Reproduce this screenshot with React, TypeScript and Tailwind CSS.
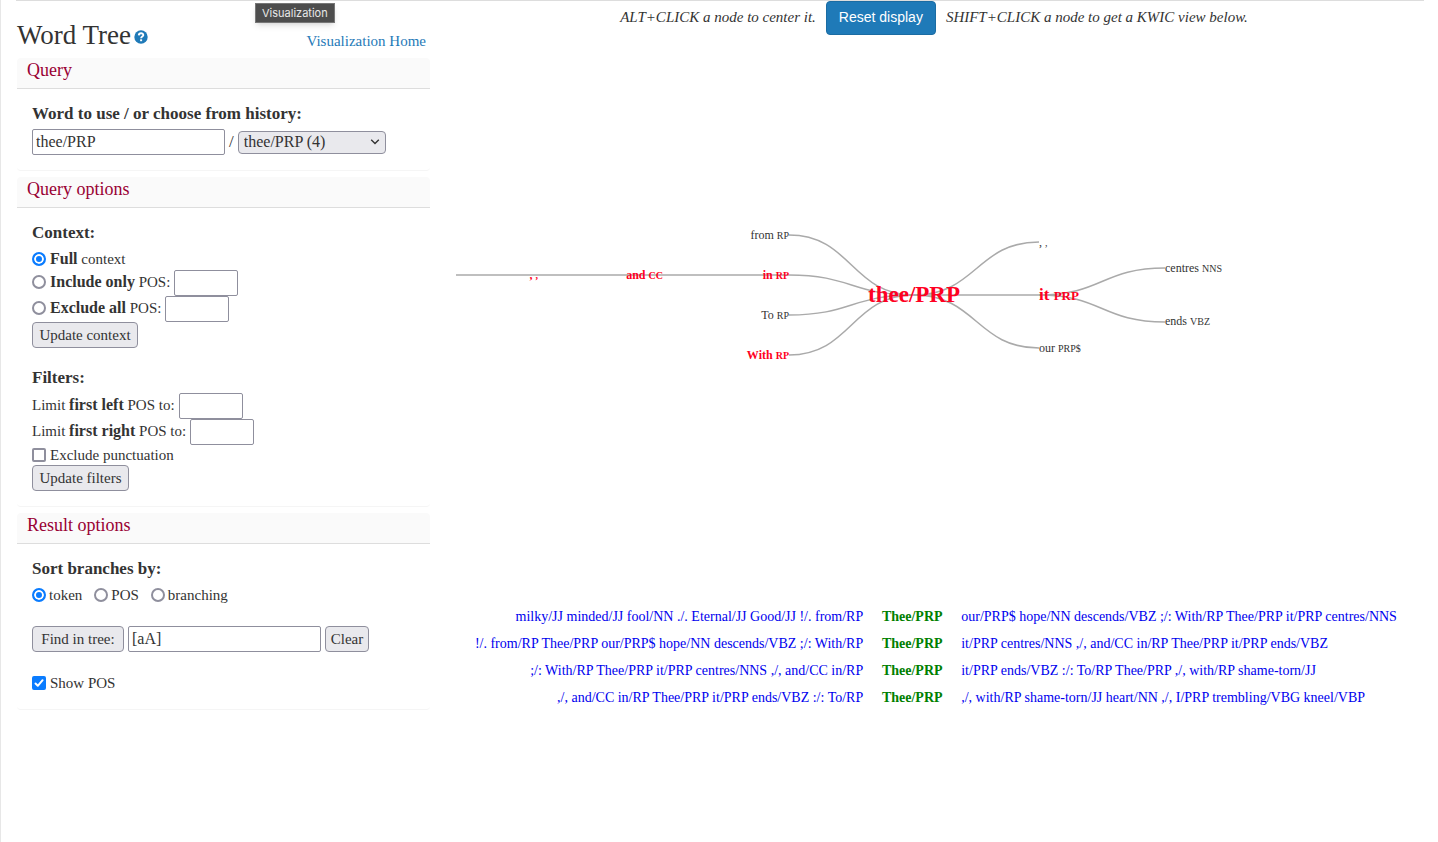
import { useId, useState } from "react";
import type { ReactNode } from "react";

function Panel({ title, children }: { title: string; children: ReactNode }) {
  return (
    <section className="mb-1.5 rounded border-b border-[#f5f5f5] bg-white">
      <h2 className="h-[31px] rounded-t border-b border-[#dddddd] bg-[#fafafa] pl-2.5 text-[18px] leading-6 text-[#990033]">
        {title}
      </h2>
      <div className="px-[15px] py-[15px]">{children}</div>
    </section>
  );
}

function GroupTitle({ children }: { children: ReactNode }) {
  return <h3 className="mb-[5px] text-[17px] leading-5 font-bold">{children}</h3>;
}

function Radio(props: { id: string; name: string; defaultChecked?: boolean }) {
  return (
    <input
      type="radio"
      {...props}
      className="size-3.5 shrink-0 appearance-none rounded-full border-2 border-[#8f8f9d] bg-white checked:border-[#0a7cff] checked:bg-[#0a7cff] checked:shadow-[inset_0_0_0_2px_#ffffff]"
    />
  );
}

function Check({ id, defaultChecked }: { id: string; defaultChecked?: boolean }) {
  return (
    <span className="grid size-3.5 shrink-0">
      <input
        id={id}
        type="checkbox"
        defaultChecked={defaultChecked}
        className="peer col-start-1 row-start-1 size-3.5 appearance-none rounded-xs border-2 border-[#8f8f9d] bg-white checked:border-[#0a7cff] checked:bg-[#0a7cff]"
      />
      <svg
        viewBox="0 0 14 14"
        className="pointer-events-none invisible col-start-1 row-start-1 size-3.5 peer-checked:visible"
        fill="none"
        stroke="white"
        strokeWidth="2"
        strokeLinecap="round"
        strokeLinejoin="round"
      >
        <path d="M3.5 7.5 L5.8 9.8 L10.6 4.2" />
      </svg>
    </span>
  );
}

function Button({ children, className = "" }: { children: ReactNode; className?: string }) {
  return (
    <button
      type="button"
      className={`h-[26px] rounded border border-[#8f8f9d] bg-[#e9e9ed] text-center text-[15px] leading-5 whitespace-nowrap ${className}`}
    >
      {children}
    </button>
  );
}

const field = "h-[26px] rounded-xs border border-[#8f8f9d] bg-white px-[3px] text-[16px]";

function Strong({ children }: { children: ReactNode }) {
  return <b className="text-[16px]">{children}</b>;
}

function PosField({ label, radio }: { label: ReactNode; radio?: string }) {
  const id = useId();
  return (
    <div className="flex h-[26px] items-center gap-1">
      <span className="flex items-center gap-1 pb-0.5">
        {radio && <Radio id={id + "r"} name={radio} />}
        <label htmlFor={radio ? id + "r" : id}>{label}</label>
      </span>
      <input id={id} type="text" aria-label="POS" className={`${field} w-16`} />
    </div>
  );
}

type Node = {
  x: number;
  y: number;
  word: string;
  pos: string;
  size: number;
  posSize: number;
  anchor: "start" | "end";
  hot?: boolean;
};

const nodes: Node[] = [
  { x: 333, y: 203, word: "from", pos: "RP", size: 12, posSize: 10, anchor: "end" },
  { x: 333, y: 243, word: "in", pos: "RP", size: 12, posSize: 10, anchor: "end", hot: true },
  { x: 333, y: 283, word: "To", pos: "RP", size: 12, posSize: 10, anchor: "end" },
  { x: 333, y: 323, word: "With", pos: "RP", size: 12, posSize: 10, anchor: "end", hot: true },
  { x: 207, y: 243, word: "and", pos: "CC", size: 12, posSize: 10, anchor: "end", hot: true },
  { x: 82, y: 243, word: ",", pos: ",", size: 12, posSize: 10, anchor: "end", hot: true },
  { x: 583, y: 210, word: ",", pos: ",", size: 12, posSize: 10, anchor: "start" },
  { x: 583, y: 264, word: "it", pos: "PRP", size: 17, posSize: 13, anchor: "start", hot: true },
  { x: 583, y: 316, word: "our", pos: "PRP$", size: 12, posSize: 10, anchor: "start" },
  { x: 709, y: 236, word: "centres", pos: "NNS", size: 12, posSize: 10, anchor: "start" },
  { x: 709, y: 289, word: "ends", pos: "VBZ", size: 12, posSize: 10, anchor: "start" },
];

const links = [
  [458, 259, 333, 199],
  [458, 259, 333, 239],
  [458, 259, 333, 279],
  [458, 259, 333, 319],
  [333, 239, 0, 239],
  [458, 259, 583, 206],
  [458, 259, 583, 259],
  [458, 259, 583, 312],
  [583, 259, 709, 232],
  [583, 259, 709, 286],
];

function WordTree() {
  return (
    <svg viewBox="0 0 968 567" className="block h-auto w-full" role="img" aria-label="Word tree">
      <g fill="none" stroke="#aaaaaa" strokeWidth="1.5">
        {links.map(([x1, y1, x2, y2], i) => {
          const mid = (x1 + x2) / 2;
          return <path key={i} d={`M${x1} ${y1}C${mid} ${y1} ${mid} ${y2} ${x2} ${y2}`} />;
        })}
      </g>
      {nodes.map((n, i) => (
        <text
          key={i}
          x={n.x}
          y={n.y}
          fontSize={n.size}
          textAnchor={n.anchor}
          fill={n.hot ? "#ff0022" : "#333333"}
          fontWeight={n.hot ? 700 : 400}
        >
          {n.word} <tspan fontSize={n.posSize}>{n.pos}</tspan>
        </text>
      ))}
      <text x="458" y="266" fontSize="23" fontWeight="700" fill="#ff0022" textAnchor="middle">
        thee/PRP
      </text>
    </svg>
  );
}

const concordance = [
  [
    "milky/JJ minded/JJ fool/NN ./. Eternal/JJ Good/JJ !/. from/RP",
    "our/PRP$ hope/NN descends/VBZ ;/: With/RP Thee/PRP it/PRP centres/NNS",
  ],
  [
    "!/. from/RP Thee/PRP our/PRP$ hope/NN descends/VBZ ;/: With/RP",
    "it/PRP centres/NNS ,/, and/CC in/RP Thee/PRP it/PRP ends/VBZ",
  ],
  [
    ";/: With/RP Thee/PRP it/PRP centres/NNS ,/, and/CC in/RP",
    "it/PRP ends/VBZ :/: To/RP Thee/PRP ,/, with/RP shame-torn/JJ",
  ],
  [
    ",/, and/CC in/RP Thee/PRP it/PRP ends/VBZ :/: To/RP",
    ",/, with/RP shame-torn/JJ heart/NN ,/, I/PRP trembling/VBG kneel/VBP",
  ],
];

export default function App() {
  const [word, setWord] = useState("thee/PRP");
  const [find, setFind] = useState("[aA]");
  return (
    <div className="min-h-screen border-l border-[#e7e7e7] bg-white pr-3.5 pl-[15px] font-['Liberation_Serif',serif] text-[15px] leading-5 text-[#333333]">
      <div className="flex gap-3.5 border-t border-[#dddddd]">
        <aside className="w-[414px] shrink-0 pl-px">
          <header className="relative flex h-[57px] items-start justify-between pr-1">
            <h1 className="flex items-center gap-[3px] pt-4 text-[27px] leading-9">
              Word Tree
              <a href="#help" aria-label="Help">
                <svg viewBox="0 0 14 14" className="mt-1 size-3.5">
                  <circle cx="7" cy="7" r="6.7" fill="#1f7ab8" />
                  <path
                    d="M4.8 5.4C4.9 2.6 9.4 2.7 9.3 5.2C9.2 6.7 7.1 6.5 7.1 8.3"
                    fill="none"
                    stroke="white"
                    strokeWidth="1.9"
                  />
                  <rect x="6.1" y="9.3" width="2" height="1.9" fill="white" />
                </svg>
              </a>
            </h1>
            <a href="#home" className="pt-[30px] text-[15px] text-[#1f7ab8]">
              Visualization Home
            </a>
            <div
              role="tooltip"
              className="absolute top-0.5 left-[238px] border border-[#777777] bg-[#4d4d4d] px-1.5 font-['Inter',sans-serif] text-[11px] leading-[18px] text-[#e8e8e8] shadow-md"
            >
              Visualization
            </div>
          </header>

          <Panel title="Query">
            <GroupTitle>
              <label htmlFor="word">Word to use / or choose from history:</label>
            </GroupTitle>
            <div className="flex items-center gap-1">
              <input
                id="word"
                type="text"
                value={word}
                onChange={(e) => setWord(e.target.value)}
                className={`${field} w-[193px]`}
              />
              <span className="text-[17px]">/</span>
              <span className="grid items-center">
                <select
                  aria-label="History"
                  className="col-start-1 row-start-1 h-[23px] w-[148px] appearance-none rounded border border-[#8f8f9d] bg-[#e9e9ed] pl-[5px] text-[16px] leading-5"
                >
                  <option>thee/PRP (4)</option>
                </select>
                <svg
                  viewBox="0 0 10 6"
                  className="pointer-events-none col-start-1 row-start-1 mr-1.5 h-1.5 w-2.5 justify-self-end"
                  fill="none"
                  stroke="#333333"
                  strokeWidth="1.4"
                >
                  <path d="M1.2 0.8 L5 4.6 L8.8 0.8" />
                </svg>
              </span>
            </div>
          </Panel>

          <Panel title="Query options">
            <GroupTitle>Context:</GroupTitle>
            <div className="flex h-[22px] items-center gap-1">
              <Radio id="full" name="context" defaultChecked />
              <label htmlFor="full">
                <Strong>Full</Strong> context
              </label>
            </div>
            <PosField radio="context" label={<><Strong>Include only</Strong> POS:</>} />
            <PosField radio="context" label={<><Strong>Exclude all</Strong> POS:</>} />
            <Button className="mb-5 block w-[106px]">Update context</Button>
            <GroupTitle>Filters:</GroupTitle>
            <PosField label={<>Limit <Strong>first left</Strong> POS to:</>} />
            <PosField label={<>Limit <Strong>first right</Strong> POS to:</>} />
            <div className="flex h-5 items-center gap-1">
              <Check id="punct" />
              <label htmlFor="punct">Exclude punctuation</label>
            </div>
            <Button className="block w-[97px]">Update filters</Button>
          </Panel>

          <Panel title="Result options">
            <GroupTitle>Sort branches by:</GroupTitle>
            <div className="mb-5 flex h-[22px] items-center gap-3">
              {["token", "POS", "branching"].map((name, i) => (
                <span key={name} className="flex items-center gap-[3px]">
                  <Radio id={name} name="sort" defaultChecked={i === 0} />
                  <label htmlFor={name}>{name}</label>
                </span>
              ))}
            </div>
            <div className="mb-5 flex items-center gap-1">
              <Button className="w-[92px]">Find in tree:</Button>
              <input
                type="text"
                aria-label="Find in tree"
                value={find}
                onChange={(e) => setFind(e.target.value)}
                className={`${field} w-[193px]`}
              />
              <Button className="w-11">Clear</Button>
            </div>
            <div className="flex h-[22px] items-center gap-1">
              <Check id="showpos" defaultChecked />
              <label htmlFor="showpos">Show POS</label>
            </div>
          </Panel>
        </aside>

        <main className="min-w-0 flex-1">
          <div className="flex items-start justify-center gap-2.5 pb-px text-[15px] whitespace-nowrap italic">
            <span className="pt-1.5">ALT+CLICK a node to center it.</span>
            <button
              type="button"
              className="h-[34px] w-[110px] rounded border border-[#1b6ca3] bg-[#1f7ab8] pb-0.5 font-['Liberation_Sans',sans-serif] text-[14px] text-white not-italic"
            >
              Reset display
            </button>
            <span className="pt-1.5">SHIFT+CLICK a node to get a KWIC view below.</span>
          </div>
          <div className="pl-3">
            <WordTree />
            <table className="w-full table-fixed border-collapse text-[14px] leading-[27px] whitespace-nowrap">
              <tbody>
                {concordance.map(([left, right], i) => (
                  <tr key={i}>
                    <td className="w-[43%] pr-[9px] text-right">
                      <a href="#left" className="text-[#0000ee]">{left}</a>
                    </td>
                    <td className="w-20 text-center font-bold text-[#008000]">Thee/PRP</td>
                    <td className="pl-[9px]">
                      <a href="#right" className="text-[#0000ee]">{right}</a>
                    </td>
                  </tr>
                ))}
              </tbody>
            </table>
          </div>
        </main>
      </div>
    </div>
  );
}
